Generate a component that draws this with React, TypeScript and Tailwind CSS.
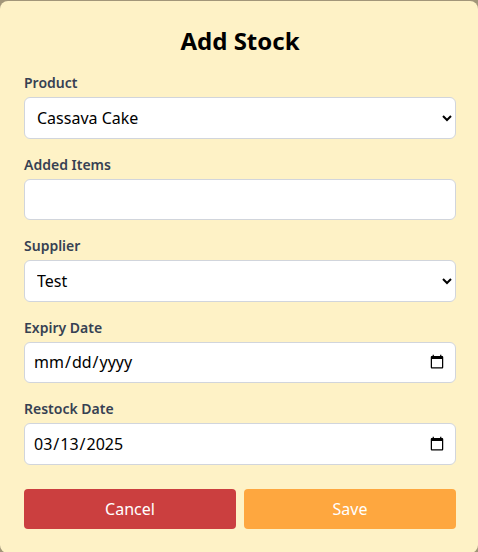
import { useState } from 'react';

const FONT = { fontFamily: '"Noto Sans", "Open Sans", sans-serif' };

const inputClass =
  'block h-[41.5px] w-full rounded-md border border-gray-300 bg-white px-2 text-base text-black outline-none';

function Field({ label, children }: { label: string; children: React.ReactNode }) {
  return (
    <div>
      <label className="mb-1 block text-sm leading-5 font-semibold text-gray-700">{label}</label>
      {children}
    </div>
  );
}

export default function App() {
  const [product, setProduct] = useState('cassava');
  const [supplier, setSupplier] = useState('test');
  const [added, setAdded] = useState('');
  const [expiry, setExpiry] = useState('');
  const [restock, setRestock] = useState('2025-03-13');

  return (
    <div className="h-screen overflow-hidden bg-[#a29679] pt-px" style={FONT}>
      <div className="rounded-lg bg-[#fef2c6] pt-6 pr-[22px] pb-6 pl-6">
        <h2 className="mb-4 text-center text-2xl leading-8 font-bold text-black">Add Stock</h2>

        <div className="flex flex-col gap-4">
          <Field label="Product">
            <select className={inputClass} value={product} onChange={(e) => setProduct(e.target.value)}>
              <option value="cassava">Cassava Cake</option>
              <option value="ube">Ube Halaya</option>
            </select>
          </Field>

          <Field label="Added Items">
            <input type="number" className={inputClass} value={added} onChange={(e) => setAdded(e.target.value)} />
          </Field>

          <Field label="Supplier">
            <select className={inputClass} value={supplier} onChange={(e) => setSupplier(e.target.value)}>
              <option value="test">Test</option>
            </select>
          </Field>

          <Field label="Expiry Date">
            <input type="date" className={inputClass} value={expiry} onChange={(e) => setExpiry(e.target.value)} />
          </Field>

          <Field label="Restock Date">
            <input type="date" className={inputClass} value={restock} onChange={(e) => setRestock(e.target.value)} />
          </Field>
        </div>

        <div className="mt-6 flex gap-2">
          <button className="h-10 flex-1 rounded bg-[#cb3f3f] text-base text-white">Cancel</button>
          <button className="h-10 flex-1 rounded bg-[#fea73f] text-base text-white">Save</button>
        </div>
      </div>
    </div>
  );
}
